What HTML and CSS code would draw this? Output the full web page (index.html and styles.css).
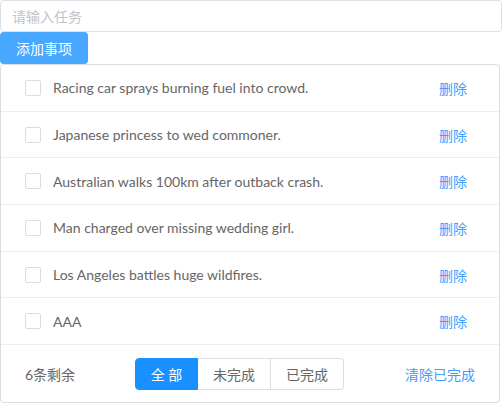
FILE: index.html
```html
<!DOCTYPE html>
<html lang="zh">
<head>
<meta charset="utf-8">
<link rel="stylesheet" href="styles.css">
</head>
<body>
<div class="app">
  <input class="task-input" type="text" placeholder="请输入任务">
  <button class="add-btn">添加事项</button>
  <div class="card">
    <ul class="list">
      <li class="item"><span class="check"></span><span class="title">Racing car sprays burning fuel into crowd.</span><a class="del">删除</a></li>
      <li class="item"><span class="check"></span><span class="title">Japanese princess to wed commoner.</span><a class="del">删除</a></li>
      <li class="item"><span class="check"></span><span class="title">Australian walks 100km after outback crash.</span><a class="del">删除</a></li>
      <li class="item"><span class="check"></span><span class="title">Man charged over missing wedding girl.</span><a class="del">删除</a></li>
      <li class="item"><span class="check"></span><span class="title">Los Angeles battles huge wildfires.</span><a class="del">删除</a></li>
      <li class="item"><span class="check"></span><span class="title">AAA</span><a class="del">删除</a></li>
    </ul>
    <div class="footer">
      <span class="left">6条剩余</span>
      <div class="group">
        <span class="seg active">全 部</span>
        <span class="seg">未完成</span>
        <span class="seg">已完成</span>
      </div>
      <a class="clear">清除已完成</a>
    </div>
  </div>
</div>
</body>
</html>
```
FILE: styles.css
```css
* { box-sizing: border-box; }
html, body { margin: 0; padding: 0; background: #fff; }
body {
  font-family: "Lato", "Noto Sans CJK SC", sans-serif;
  font-size: 14px;
  color: #666;
}
.app { width: 502px; }
.task-input {
  display: block;
  width: 502px;
  height: 32px;
  margin: 0;
  padding: 0 11px;
  border: 1px solid #dcdfe6;
  border-radius: 4px;
  font-family: inherit;
  font-size: 14px;
  outline: none;
}
.task-input::placeholder { color: #c0c4cc; }
.add-btn {
  display: block;
  width: 88px;
  height: 32px;
  margin: 0;
  padding: 0;
  border: none;
  border-radius: 4px;
  background: #48a7ff;
  color: #fff;
  font-family: inherit;
  font-size: 14px;
}
.card {
  width: 500px;
  margin-left: 0;
  border: 1px solid #dddddd;
  border-radius: 4px;
}
.list { list-style: none; margin: 0; padding: 0; }
.item {
  display: flex;
  align-items: center;
  height: 46.7px;
  padding: 0 24px;
  border-bottom: 1px solid #eeeeee;
}
.check {
  width: 16px;
  height: 16px;
  border: 1px solid #dcdcdc;
  border-radius: 2px;
  margin-right: 12px;
  flex: none;
}
.title { flex: 1; color: #666; }
.del { color: #409eff; margin-right: 8px; }
.footer {
  display: flex;
  align-items: center;
  height: 57px;
  padding: 0 24px;
}
.left { width: 110px; color: #666; }
.group { display: flex; }
.seg {
  display: flex;
  align-items: center;
  justify-content: center;
  width: 73px;
  height: 32px;
  border: 1px solid #dcdfe6;
  border-left: none;
  color: #666;
}
.seg:first-child { width: 63px; border-left: 1px solid #1890ff; border-radius: 4px 0 0 4px; }
.seg:last-child { border-radius: 0 4px 4px 0; }
.seg.active { background: #1890ff; border-color: #1890ff; color: #fff; }
.clear { margin-left: auto; color: #409eff; margin-right: 0; }
```
